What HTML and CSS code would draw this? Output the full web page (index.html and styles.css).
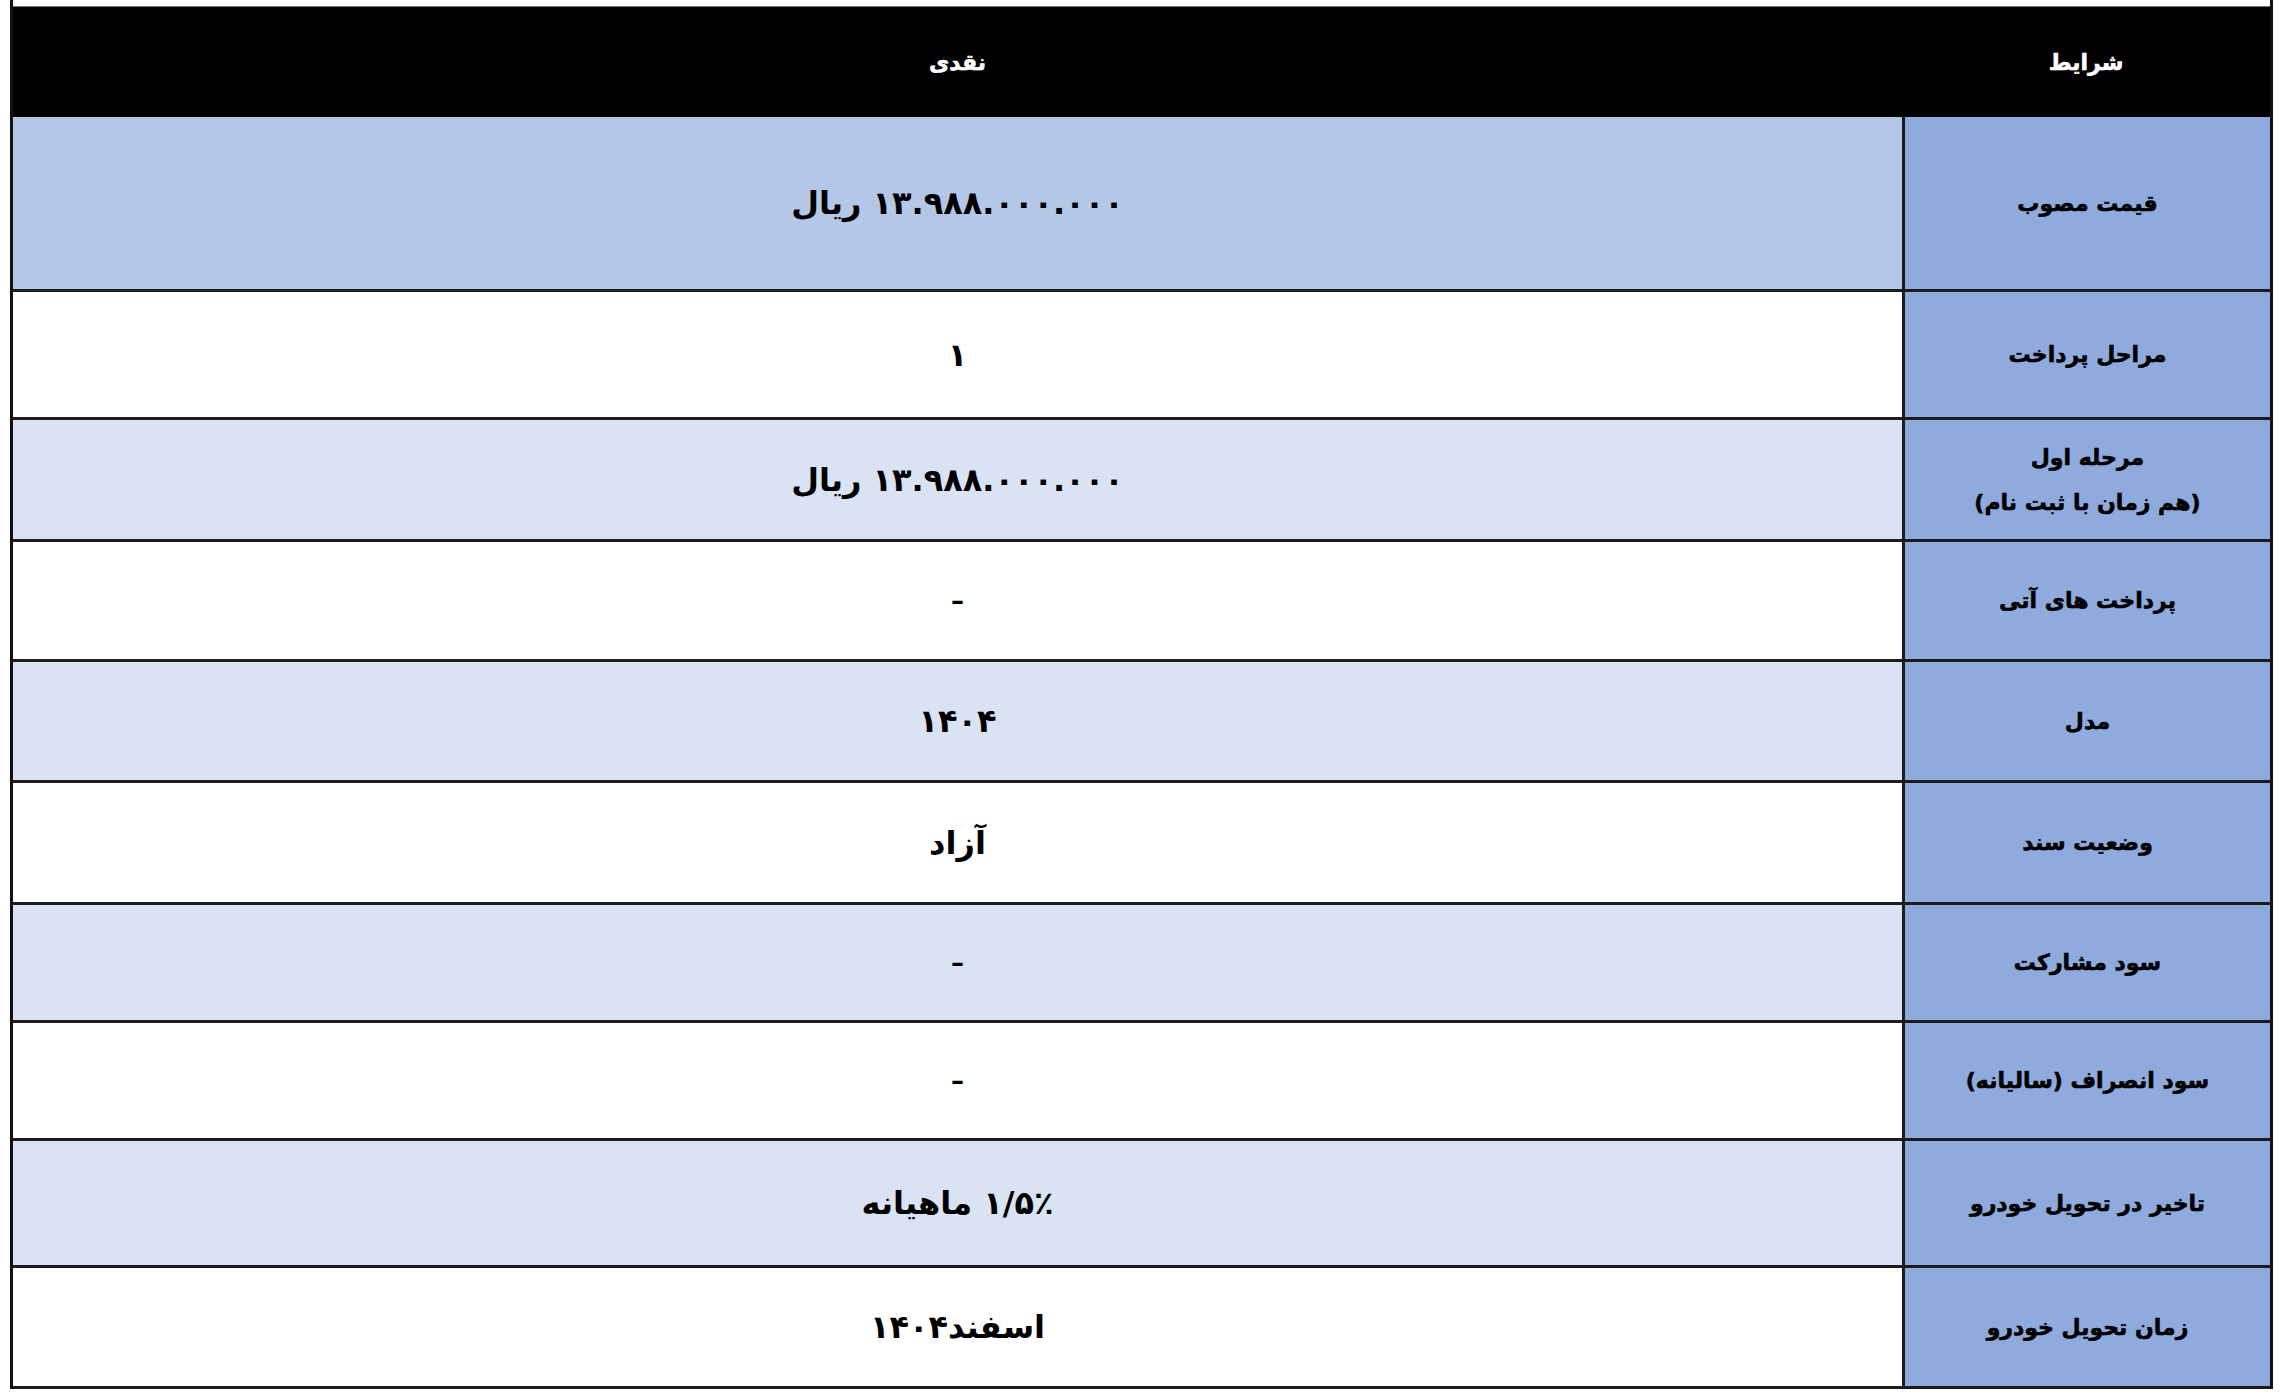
FILE: index.html
```html
<!DOCTYPE html>
<html lang="fa" dir="rtl">
<head>
<meta charset="utf-8">
<title>شرایط فروش</title>
<link rel="stylesheet" href="styles.css">
</head>
<body>
<div class="sheet">
  <div class="topgap"></div>
  <div class="row head">
    <div class="label">شرایط</div>
    <div class="value">نقدی</div>
  </div>
  <div class="row r1 tone-mid">
    <div class="label">قیمت مصوب</div>
    <div class="value big">۱۳.۹۸۸.۰۰۰.۰۰۰ ریال</div>
  </div>
  <div class="row r2">
    <div class="label">مراحل پرداخت</div>
    <div class="value big">۱</div>
  </div>
  <div class="row r3 tone-light">
    <div class="label two"><span>مرحله اول</span><span>(هم زمان با ثبت نام)</span></div>
    <div class="value big">۱۳.۹۸۸.۰۰۰.۰۰۰ ریال</div>
  </div>
  <div class="row r4">
    <div class="label">پرداخت های آتی</div>
    <div class="value dash">–</div>
  </div>
  <div class="row r5 tone-light">
    <div class="label">مدل</div>
    <div class="value big">۱۴۰۴</div>
  </div>
  <div class="row r6">
    <div class="label">وضعیت سند</div>
    <div class="value big">آزاد</div>
  </div>
  <div class="row r7 tone-light">
    <div class="label">سود مشارکت</div>
    <div class="value dash">–</div>
  </div>
  <div class="row r8">
    <div class="label">سود انصراف (سالیانه)</div>
    <div class="value dash">–</div>
  </div>
  <div class="row r9 tone-light">
    <div class="label">تاخیر در تحویل خودرو</div>
    <div class="value big">۱/۵٪ ماهیانه</div>
  </div>
  <div class="row r10">
    <div class="label">زمان تحویل خودرو</div>
    <div class="value big">اسفند۱۴۰۴</div>
  </div>
</div>
</body>
</html>
```

FILE: styles.css
```css
html, body {
  margin: 0;
  padding: 0;
  background: #ffffff;
}

body {
  font-family: "DejaVu Sans", sans-serif;
  color: #000;
}

.sheet {
  margin: 0 9px 0 10px;
  border-left: 3px solid #111;
  border-right: 3px solid #111;
  box-sizing: border-box;
  direction: rtl;
}

.topgap {
  height: 6px;
  border-bottom: 1px solid #777;
  background: #fff;
}

.row {
  display: grid;
  grid-template-columns: 368px 1fr;
  border-bottom: 3px solid #1c1c1c;
  box-sizing: border-box;
  background: #ffffff;
}

.row > div {
  display: flex;
  align-items: center;
  justify-content: center;
  text-align: center;
}

.label {
  background: #8faadc;
  border-left: 3px solid #1c1c1c;
  font-weight: bold;
  font-size: 22px;
  -webkit-text-stroke: 0.6px currentColor;
}

.label.two {
  flex-direction: column;
  gap: 20px;
}

.value.big {
  font-weight: bold;
  font-size: 32px;
}

.value.dash {
  font-weight: bold;
  font-size: 26px;
}

.head {
  background: #000;
  color: #fff;
  height: 110px;
  border-bottom: 0;
}

.head .label {
  background: #000;
  border-left: 0;
}

.head .value {
  font-weight: bold;
  font-size: 22px;
  -webkit-text-stroke: 0.6px currentColor;
}

.tone-mid { background: #b4c7e7; }
.tone-light { background: #dae3f3; }

.r1 { height: 175px; }
.r2 { height: 128px; }
.r3 { height: 122px; }
.r4 { height: 120px; }
.r5 { height: 121px; }
.r6 { height: 122px; }
.r7 { height: 118px; }
.r8 { height: 118px; }
.r9 { height: 127px; }
.r10 { height: 121px; }
```
